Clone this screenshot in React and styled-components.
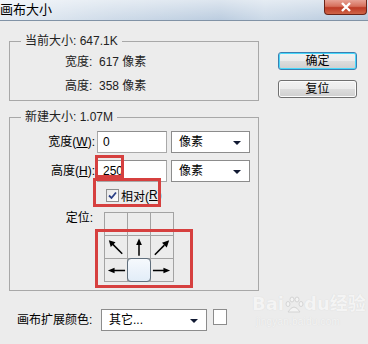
import React from "react";
import styled, { createGlobalStyle } from "styled-components";

const GlobalStyle = createGlobalStyle`
  html, body {
    margin: 0;
    padding: 0;
    background: #ececec;
  }
  body {
    font-family: "Liberation Sans", "Noto Sans CJK SC", sans-serif;
    font-size: 12px;
    color: #000;
  }
`;

const Dialog = styled.div`
  position: relative;
  width: 368px;
  height: 344px;
  overflow: hidden;
  background: #ececec;
`;

const TitleBar = styled.div`
  height: 21px;
  display: flex;
  align-items: center;
  justify-content: space-between;
  background:
    linear-gradient(to bottom, rgba(255, 255, 255, 0.55) 0%, rgba(255, 255, 255, 0.1) 100%),
    linear-gradient(to right, #e4ebf3 0%, #c9d7e6 30%, #b4c7dc 60%, #c6d5e5 72%, #aec2d8 100%);
  border-bottom: 1px solid #8193a6;
  box-sizing: border-box;
`;

const Title = styled.span`
  font-size: 13px;
  line-height: 20px;
  padding-bottom: 1px;
`;

const CloseButton = styled.div`
  align-self: flex-start;
  width: 43px;
  height: 15px;
  margin-right: 1px;
  border: 1px solid #6b2418;
  border-top: none;
  border-radius: 0 0 4px 4px;
  background: linear-gradient(to bottom, #e7a194 0%, #d6705c 45%, #bd3a25 55%, #cf6447 100%);
  display: flex;
  align-items: center;
  justify-content: center;
  box-sizing: border-box;
`;

const Body = styled.div`
  display: flex;
  padding: 13px 0 0 9px;
`;

const LeftColumn = styled.div`
  width: 250px;
`;

const RightColumn = styled.div`
  display: flex;
  flex-direction: column;
  gap: 10px;
  margin-left: 19px;
  padding-top: 18px;
`;

const Group = styled.fieldset`
  margin: ${(p) => p.$top || 0}px 0 0 0;
  padding: 0;
  border: 1px solid #a8a8a8;
  min-width: 0;
`;

const Legend = styled.legend`
  margin-left: 11px;
  padding: 0 4px;
  line-height: 14px;
  color: #222;
`;

const InfoRows = styled.div`
  padding: 2px 0 2px 55px;
`;

const InfoRow = styled.div`
  height: 24px;
  line-height: 24px;
  color: #222;
`;

const FormRows = styled.div`
  padding: 7px 0 8px 0;
`;

const FormRow = styled.div`
  display: flex;
  align-items: ${(p) => p.$align || "center"};
  margin-top: ${(p) => p.$mt || 0}px;
`;

const Label = styled.label`
  width: ${(p) => p.$w || 85}px;
  text-align: right;
  flex-shrink: 0;
  box-sizing: border-box;
  line-height: ${(p) => p.$lh || 22}px;
`;

const Key = styled.span`
  text-decoration: underline;
`;

const TextInput = styled.div`
  width: 70px;
  height: 22px;
  margin-left: 2px;
  box-sizing: border-box;
  background: #fff;
  border: 1px solid #a9a9a9;
  border-top-color: #8e8e8e;
  padding-left: 5px;
  line-height: 20px;
  font-size: 12px;
`;

const Select = styled.div`
  position: relative;
  width: ${(p) => p.$w || 79}px;
  height: 22px;
  margin-left: ${(p) => p.$ml || 4}px;
  box-sizing: border-box;
  background: #fff;
  border: 1px solid #8c8c8c;
  padding-left: 7px;
  line-height: 20px;
  &::after {
    content: "";
    position: absolute;
    right: 8px;
    top: 9px;
    border-left: 4px solid transparent;
    border-right: 4px solid transparent;
    border-top: 4px solid #111a33;
  }
`;

const CheckRow = styled.div`
  display: flex;
  align-items: center;
  margin-left: 96px;
  height: 16px;
`;

const CheckBox = styled.span`
  width: 13px;
  height: 13px;
  box-sizing: border-box;
  border: 1px solid #8e8f8f;
  background: linear-gradient(135deg, #e6e6e6, #ffffff);
  display: flex;
  align-items: center;
  justify-content: center;
  margin-right: 2px;
`;

const AnchorGrid = styled.div`
  display: grid;
  grid-template-columns: repeat(3, 23px);
  grid-template-rows: repeat(3, 23px);
  margin-left: 11px;
  border-top: 1px solid #a3a3a3;
  border-left: 1px solid #a3a3a3;
`;

const Cell = styled.div`
  position: relative;
  border-right: 1px solid #a3a3a3;
  border-bottom: 1px solid #a3a3a3;
  display: flex;
  align-items: center;
  justify-content: center;
`;

const Anchor = styled.div`
  position: absolute;
  inset: -1px -1px -1px -1px;
  border: 1px solid #5f6e7c;
  border-radius: 4px;
  background: linear-gradient(to bottom, #f6f9fd, #e2edf8);
`;

const Button = styled.div`
  width: 79px;
  height: 18px;
  box-sizing: border-box;
  border: 1px solid ${(p) => (p.$default ? "#3c7fb1" : "#707070")};
  border-radius: 3px;
  background: linear-gradient(to bottom, #f2f2f2 0%, #ebebeb 50%, #dddddd 51%, #cfcfcf 100%);
  box-shadow: ${(p) => (p.$default ? "inset 0 0 0 1px #48d8fb" : "inset 0 0 0 1px #fcfcfc")};
  text-align: center;
  line-height: 16px;
`;

const BottomRow = styled.div`
  display: flex;
  align-items: flex-start;
  margin-top: 18px;
  padding-left: 8px;
`;

const BottomLabel = styled.span`
  width: 80px;
  line-height: 22px;
`;

const Swatch = styled.div`
  width: 14px;
  height: 16px;
  margin-left: 6px;
  box-sizing: border-box;
  border: 1px solid #8c8c8c;
  background: #fff;
`;

const Highlight = styled.div`
  position: absolute;
  border: 3px solid #d6403f;
  box-sizing: border-box;
`;

const Watermark = styled.div`
  position: absolute;
  left: 252px;
  top: 294px;
  display: flex;
  flex-direction: column;
  align-items: flex-start;
  color: #f4f4f4;
  text-shadow: 0 0 1px #d4d4d4;
`;

const WatermarkLogo = styled.div`
  display: flex;
  align-items: flex-end;
  font-family: "DejaVu Sans", "Noto Sans CJK SC", sans-serif;
  font-weight: bold;
  font-size: 18px;
  line-height: 20px;
`;

const WatermarkUrl = styled.div`
  font-size: 10px;
  margin-top: 2px;
  margin-left: 4px;
  letter-spacing: 0.2px;
`;

const Arrow = ({ dir }) => {
  const paths = {
    nw: { line: "M18 18 L8 8", head: "M4 4 L11 6 L6 11 Z" },
    n: { line: "M11.5 20 L11.5 7", head: "M11.5 2 L14.5 9 L8.5 9 Z" },
    ne: { line: "M4 19 L14 9", head: "M19 4 L16.5 11.5 L11.5 6.5 Z" },
    w: { line: "M21 11.5 L8 11.5", head: "M3 11.5 L10 8.5 L10 14.5 Z" },
    e: { line: "M2 11.5 L15 11.5", head: "M20 11.5 L13 8.5 L13 14.5 Z" },
  };
  const p = paths[dir];
  return (
    <svg width="23" height="23" viewBox="0 0 23 23">
      <path d={p.line} stroke="#000" strokeWidth="1.6" />
      <path d={p.head} fill="#000" />
    </svg>
  );
};

export default function App() {
  const cells = [null, null, null, "nw", "n", "ne", "w", "anchor", "e"];
  return (
    <Dialog>
      <GlobalStyle />
      <TitleBar>
        <Title>画布大小</Title>
        <CloseButton>
          <svg width="12" height="10" viewBox="0 0 12 10">
            <path d="M2 1 L10 9 M10 1 L2 9" stroke="#fff" strokeWidth="2.4" />
          </svg>
        </CloseButton>
      </TitleBar>
      <Body>
        <LeftColumn>
          <Group>
            <Legend>当前大小: 647.1K</Legend>
            <InfoRows>
              <InfoRow>宽度:&nbsp; 617 像素</InfoRow>
              <InfoRow>高度:&nbsp; 358 像素</InfoRow>
            </InfoRows>
          </Group>
          <Group $top={9}>
            <Legend>新建大小: 1.07M</Legend>
            <FormRows>
              <FormRow>
                <Label>
                  宽度(<Key>W</Key>):
                </Label>
                <TextInput>0</TextInput>
                <Select>像素</Select>
              </FormRow>
              <FormRow $mt={7}>
                <Label>
                  高度(<Key>H</Key>):
                </Label>
                <TextInput>250</TextInput>
                <Select>像素</Select>
              </FormRow>
              <FormRow $mt={5}>
                <CheckRow>
                  <CheckBox>
                    <svg width="9" height="9" viewBox="0 0 9 9">
                      <path d="M1 4.5 L3.5 7 L8 1.5" stroke="#2a3f86" strokeWidth="1.8" fill="none" />
                    </svg>
                  </CheckBox>
                  相对(<Key>R</Key>)
                </CheckRow>
              </FormRow>
              <FormRow $mt={9} $align="flex-start">
                <Label $w={83} $lh={12}>
                  定位:
                </Label>
                <AnchorGrid>
                  {cells.map((c, i) => (
                    <Cell key={i}>
                      {c === "anchor" ? <Anchor /> : c ? <Arrow dir={c} /> : null}
                    </Cell>
                  ))}
                </AnchorGrid>
              </FormRow>
            </FormRows>
          </Group>
          <BottomRow>
            <BottomLabel>画布扩展颜色:</BottomLabel>
            <Select $w={106} $ml={0}>其它...</Select>
            <Swatch />
          </BottomRow>
        </LeftColumn>
        <RightColumn>
          <Button $default>确定</Button>
          <Button>复位</Button>
        </RightColumn>
      </Body>

      <Watermark>
        <WatermarkLogo>
          Bai
          <svg width="20" height="18" viewBox="0 0 20 18">
            <ellipse cx="4" cy="8" rx="2" ry="2.5" fill="#f4f4f4" stroke="#d4d4d4" />
            <ellipse cx="8" cy="3.5" rx="2" ry="2.5" fill="#f4f4f4" stroke="#d4d4d4" />
            <ellipse cx="13" cy="3.5" rx="2" ry="2.5" fill="#f4f4f4" stroke="#d4d4d4" />
            <ellipse cx="17" cy="8" rx="2" ry="2.5" fill="#f4f4f4" stroke="#d4d4d4" />
            <path d="M4 16 Q10 6 16 16 Z" fill="#f4f4f4" stroke="#d4d4d4" />
          </svg>
          du经验
        </WatermarkLogo>
        <WatermarkUrl>jingyan.baidu.com</WatermarkUrl>
      </Watermark>

      <Highlight style={{ left: 95, top: 155, width: 29, height: 23 }} />
      <Highlight style={{ left: 93, top: 178, width: 68, height: 29 }} />
      <Highlight style={{ left: 95, top: 229, width: 98, height: 59 }} />
    </Dialog>
  );
}
